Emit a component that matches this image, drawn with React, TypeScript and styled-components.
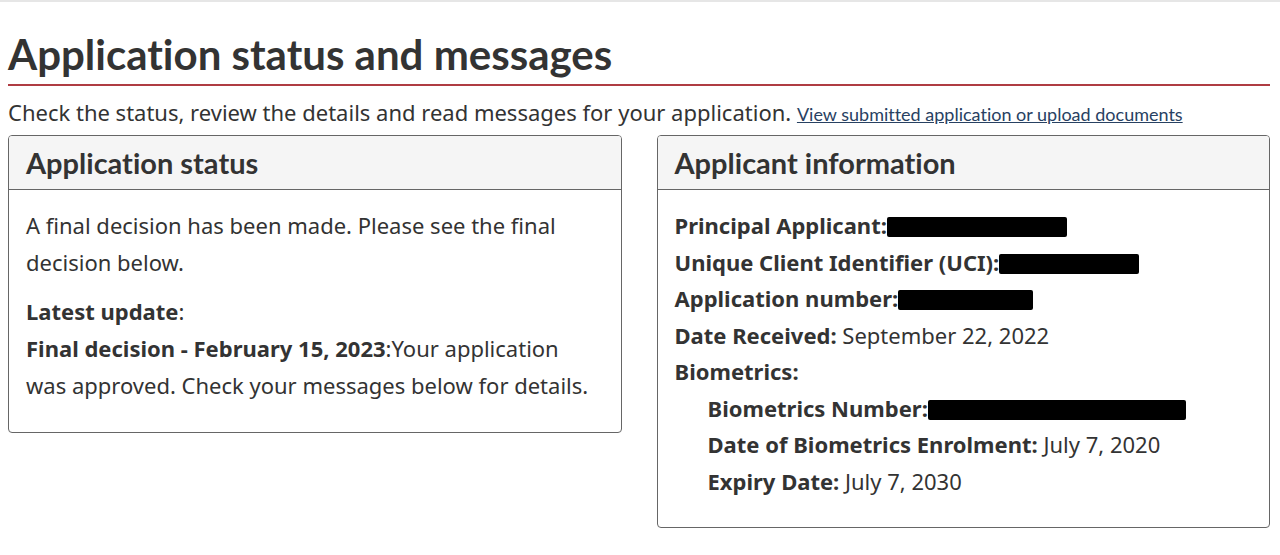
import React from "react";
import styled, { createGlobalStyle } from "styled-components";

const GlobalStyle = createGlobalStyle`
  body {
    margin: 0;
    background: #fff;
    color: #333;
    font-family: "Noto Sans", sans-serif;
  }
`;

type Field = {
  label: string;
  value?: string;
  redacted?: number;
  indent?: boolean;
};

const fields: Field[] = [
  { label: "Principal Applicant:", redacted: 180 },
  { label: "Unique Client Identifier (UCI):", redacted: 140 },
  { label: "Application number:", redacted: 135 },
  { label: "Date Received:", value: "September 22, 2022" },
  { label: "Biometrics:" },
  { label: "Biometrics Number:", redacted: 258, indent: true },
  { label: "Date of Biometrics Enrolment:", value: "July 7, 2020", indent: true },
  { label: "Expiry Date:", value: "July 7, 2030", indent: true },
];

const App = () => {
  return (
    <>
      <GlobalStyle />
      <Page>
        <Title>Application status and messages</Title>
        <Intro>
          Check the status, review the details and read messages for your application.{" "}
          <IntroLink href="#">View submitted application or upload documents</IntroLink>
        </Intro>
        <Columns>
          <Panel>
            <PanelHead>Application status</PanelHead>
            <PanelBody>
              <Para>A final decision has been made. Please see the final decision below.</Para>
              <Para>
                <strong>Latest update</strong>:
                <br />
                <strong>Final decision - February 15, 2023</strong>:Your application was approved. Check
                your messages below for details.
              </Para>
            </PanelBody>
          </Panel>
          <Panel>
            <PanelHead>Applicant information</PanelHead>
            <PanelBody>
              <FieldList>
                {fields.map((f) => (
                  <FieldRow key={f.label} indent={f.indent}>
                    <strong>{f.label}</strong>
                    {f.value && <> {f.value}</>}
                    {f.redacted && <Redacted style={{ width: f.redacted }} />}
                  </FieldRow>
                ))}
              </FieldList>
            </PanelBody>
          </Panel>
        </Columns>
      </Page>
    </>
  );
};

const Page = styled.div`
  border-top: 2px solid #e6e6e6;
  padding: 0 10px 0 8px;
`;

const Title = styled.h1`
  font-family: "Lato", sans-serif;
  font-weight: 700;
  font-size: 42px;
  line-height: 50px;
  font-variant-ligatures: no-common-ligatures;
  color: #333;
  margin: 27px 0 0;
  padding-bottom: 5px;
  border-bottom: 2px solid #af3c43;
`;

const Intro = styled.p`
  font-size: 22px;
  line-height: 32px;
  margin: 10px 0 5px;
  color: #333;
`;

const IntroLink = styled.a`
  font-family: "Lato", sans-serif;
  font-size: 18px;
  font-variant-ligatures: no-common-ligatures;
  color: #284162;
  text-decoration: underline;
`;

const Columns = styled.div`
  display: grid;
  grid-template-columns: 1fr 1fr;
  gap: 35px;
  align-items: start;
`;

const Panel = styled.section`
  border: 1px solid #666;
  border-radius: 4px;
  overflow: hidden;
`;

const PanelHead = styled.h2`
  font-family: "Lato", sans-serif;
  font-weight: 700;
  font-size: 29px;
  line-height: 32px;
  font-variant-ligatures: no-common-ligatures;
  color: #333;
  background: #f5f5f5;
  margin: 0;
  padding: 11px 17px 10px;
  border-bottom: 1px solid #666;
`;

const PanelBody = styled.div`
  padding: 17px 17px 28px;
`;

const Para = styled.p`
  font-size: 22px;
  line-height: 37px;
  margin: 0 0 12px;
  &:last-child {
    margin-bottom: 0;
  }
  strong {
    font-weight: 700;
  }
`;

const FieldList = styled.div`
  display: flex;
  flex-direction: column;
`;

const FieldRow = styled.div<{ indent?: boolean }>`
  font-size: 22px;
  line-height: 36.5px;
  padding-left: ${(p) => (p.indent ? "33px" : "0")};
  strong {
    font-weight: 700;
  }
`;

const Redacted = styled.span`
  display: inline-block;
  height: 20px;
  background: #000;
  vertical-align: -3px;
  border-radius: 2px;
`;

export default App;
